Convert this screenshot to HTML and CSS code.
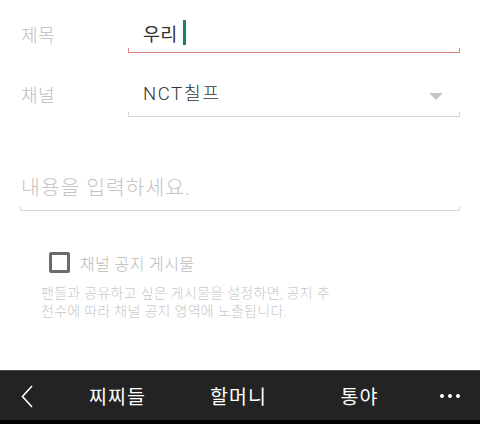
FILE: index.html
```html
<!DOCTYPE html>
<html lang="ko">
<head>
  <meta charset="UTF-8">
  <meta name="viewport" content="width=device-width, initial-scale=1.0">
  <title>글쓰기</title>
  <link rel="stylesheet" href="styles.css">
</head>
<body>
  <div class="page">
    <div class="form">
      <div class="field-row title-row">
        <span class="label">제목</span>
        <div class="field error">
          <span class="value">우리</span><span class="cursor"></span>
        </div>
      </div>

      <div class="field-row channel-row">
        <span class="label">채널</span>
        <div class="field">
          <span class="value">NCT칠프</span>
          <span class="caret"></span>
        </div>
      </div>

      <div class="field content">
        <span class="placeholder">내용을 입력하세요.</span>
      </div>

      <div class="notice">
        <label class="check-row">
          <span class="checkbox"></span>
          <span class="check-label">채널 공지 게시물</span>
        </label>
        <p class="help">팬들과 공유하고 싶은 게시물을 설정하면, 공지 추<br>천수에 따라 채널 공지 영역에 노출됩니다.</p>
      </div>
    </div>

    <nav class="bottom-bar">
      <span class="back">
        <svg width="12" height="23" viewBox="0 0 12 23">
          <polyline points="11,1 1.5,11.5 11,22" fill="none" stroke="#fff" stroke-width="1.6"/>
        </svg>
      </span>
      <span class="tab">찌찌들</span>
      <span class="tab">할머니</span>
      <span class="tab">통야</span>
      <span class="more"><i></i><i></i><i></i></span>
    </nav>
  </div>
</body>
</html>
```

FILE: styles.css
```css
* {
  margin: 0;
  padding: 0;
  box-sizing: border-box;
}

body {
  font-family: Roboto, "Noto Sans CJK KR", sans-serif;
  font-weight: 300;
  background: #fff;
  color: #333;
}

.page {
  height: 424px;
  display: flex;
  flex-direction: column;
}

.form {
  padding: 15px 20px 0 21px;
}

.field-row {
  display: flex;
  align-items: flex-end;
}

.label {
  width: 107px;
  font-size: 18px;
  letter-spacing: 0.5px;
  line-height: 37px;
  color: #bcbcbc;
}

.title-row .label {
  margin-bottom: -1px;
}

.channel-row .label {
  margin-bottom: 3px;
}

.field {
  position: relative;
  flex: 1;
  display: flex;
  align-items: center;
  padding-left: 15px;
  border-bottom: 1px solid #d6d6d6;
}

/* little end ticks on the underline */
.field::before,
.field::after {
  content: "";
  position: absolute;
  bottom: 0;
  width: 1px;
  height: 4px;
  background: #d6d6d6;
}

.field::before {
  left: 0;
}

.field::after {
  right: 0;
}

.field.error {
  border-bottom-color: #e08585;
}

.field.error::before,
.field.error::after {
  background: #e08585;
}

.title-row .field {
  height: 38px;
}

.channel-row {
  margin-top: 24px;
}

.channel-row .field {
  height: 40px;
}

.value {
  font-size: 18.5px;
  line-height: 37px;
  color: #333;
  letter-spacing: 0.3px;
}

.title-row .value {
  margin-top: 3px;
  font-weight: 400;
}

.channel-row .value {
  margin-top: -4px;
  letter-spacing: 1.6px;
}

.cursor {
  display: inline-block;
  width: 3px;
  height: 25px;
  margin-left: 5px;
  margin-top: -3px;
  background: #17806e;
}

.caret {
  margin-left: auto;
  margin-right: 17px;
  width: 0;
  height: 0;
  border-left: 7px solid transparent;
  border-right: 7px solid transparent;
  border-top: 7px solid #c4c4c4;
}

.field.content {
  margin-top: 43px;
  margin-left: -1px;
  height: 51px;
  padding-left: 1px;
}

.placeholder {
  font-size: 20.5px;
  letter-spacing: 0.9px;
  color: #c4c4c4;
  margin-top: 2px;
}

.notice {
  padding-left: 20px;
  margin-top: 38px;
}

.check-row {
  display: flex;
  align-items: center;
  gap: 10px;
  margin-left: 8px;
}

.checkbox {
  width: 21px;
  height: 21px;
  border: 3px solid #6b6b6b;
  border-radius: 2px;
}

.check-label {
  font-size: 16px;
  letter-spacing: 0.4px;
  color: #b9b9b9;
  margin-top: 2px;
}

.help {
  margin-top: 9px;
  font-size: 14px;
  letter-spacing: 0.3px;
  line-height: 18px;
  color: #c9c9c9;
}

.bottom-bar {
  margin-top: auto;
  height: 54px;
  background: #232323;
  border-top: 1px solid #4a4a4a;
  border-bottom: 4px solid #000;
  display: grid;
  grid-template-columns: 57px repeat(3, 121px) 1fr;
  align-items: center;
  color: #fff;
}

.back {
  padding-left: 21px;
  display: flex;
  align-items: center;
  margin-top: 2px;
}

.tab {
  text-align: center;
  font-size: 19.5px;
  font-weight: 400;
  letter-spacing: 1px;
}

.more {
  display: flex;
  justify-content: center;
  gap: 4px;
}

.more i {
  width: 4px;
  height: 4px;
  border-radius: 50%;
  background: #fff;
}
```
